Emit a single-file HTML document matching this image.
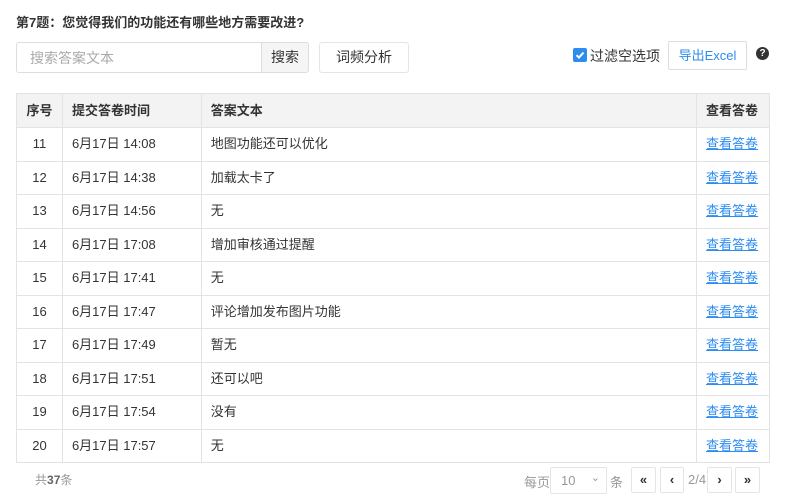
<!DOCTYPE html>
<html><head><meta charset="utf-8"><style>
*{box-sizing:border-box;margin:0;padding:0}
body{width:788px;height:497px;background:#fff;font-family:"Liberation Sans","Noto Sans CJK SC",sans-serif;font-size:13px;color:#333;position:relative;overflow:hidden}
.a{position:absolute}
.title{left:16px;top:12px;font-weight:bold;font-size:13px;color:#333}
.inp{left:16px;top:42px;width:246px;height:31px;border:1px solid #ddd;border-radius:3px 0 0 3px;color:#aaa;padding:5px 13px;font-size:14px}
.sbtn{left:261px;top:42px;width:48px;height:31px;border:1px solid #ddd;background:#f5f5f5;border-radius:0 3px 3px 0;text-align:center;line-height:29px;font-size:14px}
.cbtn{left:319px;top:42px;width:90px;height:31px;border:1px solid #e5e5e5;border-radius:3px;text-align:center;line-height:29px;font-size:14px}
.cb{left:573px;top:48px;width:14px;height:14px;background:#2d8cf0;border-radius:2px}
.ebtn{left:668px;top:41px;width:79px;height:29px;border:1px solid #ddd;border-radius:2px;color:#2d8cf0;text-align:center;line-height:27px;font-size:13px}
.q{left:756px;top:47px;width:13px;height:13px;border-radius:50%;background:#333;color:#fff;font-size:10px;font-weight:bold;text-align:center;line-height:13px}
table{position:absolute;left:16px;top:93px;width:754px;border-collapse:collapse;border:1px solid #e3e3e3}
td,th{border:1px solid #e3e3e3;height:33.5px;padding:0 9px;text-align:left;font-size:13px;line-height:32px;vertical-align:top}
th{background:#f3f3f3;height:34px;font-weight:bold;line-height:33px}
td:first-child,th:first-child{text-align:center;padding:0}
a{color:#2d8cf0;text-decoration:underline}
.pb{top:467px;height:26px;border:1px solid #e5e5e5;border-radius:2px;text-align:center;line-height:24px;font-weight:bold;font-size:13px;color:#333}
.g{color:#999;font-size:13px}
</style></head><body>
<div class="a title">第7题：您觉得我们的功能还有哪些地方需要改进?</div>
<div class="a inp">搜索答案文本</div>
<div class="a sbtn">搜索</div>
<div class="a cbtn">词频分析</div>
<div class="a cb"><svg width="14" height="14"><path d="M3.5 7.2l2.4 2.4 4.6-5" stroke="#fff" stroke-width="2" fill="none"/></svg></div>
<div class="a" style="left:590px;top:46px;font-size:14px">过滤空选项</div>
<div class="a ebtn">导出Excel</div>
<div class="a q">?</div>
<table>
<colgroup><col style="width:46px"><col style="width:139px"><col style="width:496px"><col style="width:73px"></colgroup>
<tr><th>序号</th><th>提交答卷时间</th><th>答案文本</th><th>查看答卷</th></tr>
<tr><td>11</td><td>6月17日 14:08</td><td>地图功能还可以优化</td><td><a>查看答卷</a></td></tr>
<tr><td>12</td><td>6月17日 14:38</td><td>加载太卡了</td><td><a>查看答卷</a></td></tr>
<tr><td>13</td><td>6月17日 14:56</td><td>无</td><td><a>查看答卷</a></td></tr>
<tr><td>14</td><td>6月17日 17:08</td><td>增加审核通过提醒</td><td><a>查看答卷</a></td></tr>
<tr><td>15</td><td>6月17日 17:41</td><td>无</td><td><a>查看答卷</a></td></tr>
<tr><td>16</td><td>6月17日 17:47</td><td>评论增加发布图片功能</td><td><a>查看答卷</a></td></tr>
<tr><td>17</td><td>6月17日 17:49</td><td>暂无</td><td><a>查看答卷</a></td></tr>
<tr><td>18</td><td>6月17日 17:51</td><td>还可以吧</td><td><a>查看答卷</a></td></tr>
<tr><td>19</td><td>6月17日 17:54</td><td>没有</td><td><a>查看答卷</a></td></tr>
<tr><td>20</td><td>6月17日 17:57</td><td>无</td><td><a>查看答卷</a></td></tr>
</table>
<div class="a g" style="left:35px;top:471px;font-size:12px">共<b style="color:#666">37</b>条</div>
<div class="a g" style="left:524px;top:472px">每页</div>
<div class="a" style="left:550px;top:467px;width:57px;height:27px;border:1px solid #e5e5e5;border-radius:2px;color:#999;padding:5px 10px">10<span style="position:absolute;right:6px;top:3px;font-size:11px">⌄</span></div>
<div class="a g" style="left:610px;top:472px">条</div>
<div class="a pb" style="left:631px;width:25px">«</div>
<div class="a pb" style="left:660px;width:24px">‹</div>
<div class="a g" style="left:688px;top:472px">2/4</div>
<div class="a pb" style="left:707px;width:25px">›</div>
<div class="a pb" style="left:735px;width:25px">»</div>
</body></html>
